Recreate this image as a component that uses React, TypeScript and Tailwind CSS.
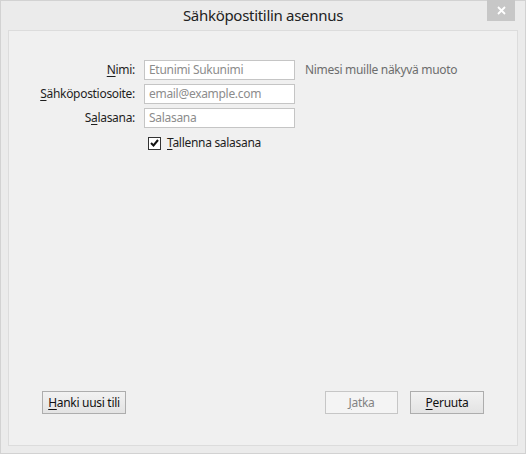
import React from "react";

const font = { fontFamily: '"Segoe UI", "Noto Sans", "Open Sans", sans-serif' };

function U({ children }: { children: React.ReactNode }) {
  return <span className="underline underline-offset-2 decoration-1">{children}</span>;
}

function Field({ placeholder }: { placeholder: string }) {
  return (
    <div className="h-[20px] w-[151px] border border-[#c5c5c5] bg-white px-[4px] flex items-center text-[#8c8c8c] leading-none">
      {placeholder}
    </div>
  );
}

export default function App() {
  return (
    <div
      className="w-[526px] h-[454px] bg-[#ebebeb] border border-[#d2d2d2] flex flex-col text-[12px] tracking-[-0.3px] text-[#1e1e1e]"
      style={font}
    >
      <div className="relative h-[29px] flex items-center justify-center shrink-0">
        <span className="text-[15px] text-[#222] leading-none">Sähköpostitilin asennus</span>
        <div className="absolute right-[10px] -top-px w-[28px] h-[21px] bg-[#c7c7c7] flex items-center justify-center">
          <svg width="9" height="9" viewBox="0 0 9 9">
            <path d="M1 1 L8 8 M8 1 L1 8" stroke="#fff" strokeWidth="1.8" />
          </svg>
        </div>
      </div>
      <div className="flex-1 mx-[7px] mb-[7px] border border-[#dcdcdc] bg-[#f0f0f0] flex flex-col pt-[29px] pb-[31px] pl-[33px] pr-[33px]">
        <div className="grid grid-cols-[93px_151px_1fr] gap-x-[9px] gap-y-[4px] items-center">
          <div className="text-right">
            <U>N</U>imi:
          </div>
          <Field placeholder="Etunimi Sukunimi" />
          <div className="text-[#6d6d6d] pl-[1px]">Nimesi muille näkyvä muoto</div>
          <div className="text-right whitespace-nowrap -ml-[40px]">
            <U>S</U>ähköpostiosoite:
          </div>
          <Field placeholder="email@example.com" />
          <div />
          <div className="text-right">
            S<U>a</U>lasana:
          </div>
          <Field placeholder="Salasana" />
          <div />
          <div />
          <div className="flex items-center gap-[6px] pl-[4px] pt-[2px]">
            <div className="w-[13px] h-[13px] border border-[#333] bg-white flex items-center justify-center">
              <svg width="9" height="8" viewBox="0 0 9 8">
                <path d="M1 4 L3.5 6.5 L8 1" stroke="#111" strokeWidth="2" fill="none" />
              </svg>
            </div>
            <span>
              <U>T</U>allenna salasana
            </span>
          </div>
          <div />
        </div>
        <div className="flex-1" />
        <div className="flex items-center">
          <button className="h-[23px] w-[84px] border border-[#adadad] bg-gradient-to-b from-[#f2f2f2] to-[#e3e3e3] text-[#111]">
            <U>H</U>anki uusi tili
          </button>
          <div className="flex-1" />
          <button className="h-[23px] w-[73px] border border-[#c6c6c6] bg-[#f4f4f4] text-[#838383]">
            <U>J</U>atka
          </button>
          <button className="ml-[12px] h-[23px] w-[74px] border border-[#adadad] bg-gradient-to-b from-[#f2f2f2] to-[#e3e3e3] text-[#111]">
            <U>P</U>eruuta
          </button>
        </div>
      </div>
    </div>
  );
}
